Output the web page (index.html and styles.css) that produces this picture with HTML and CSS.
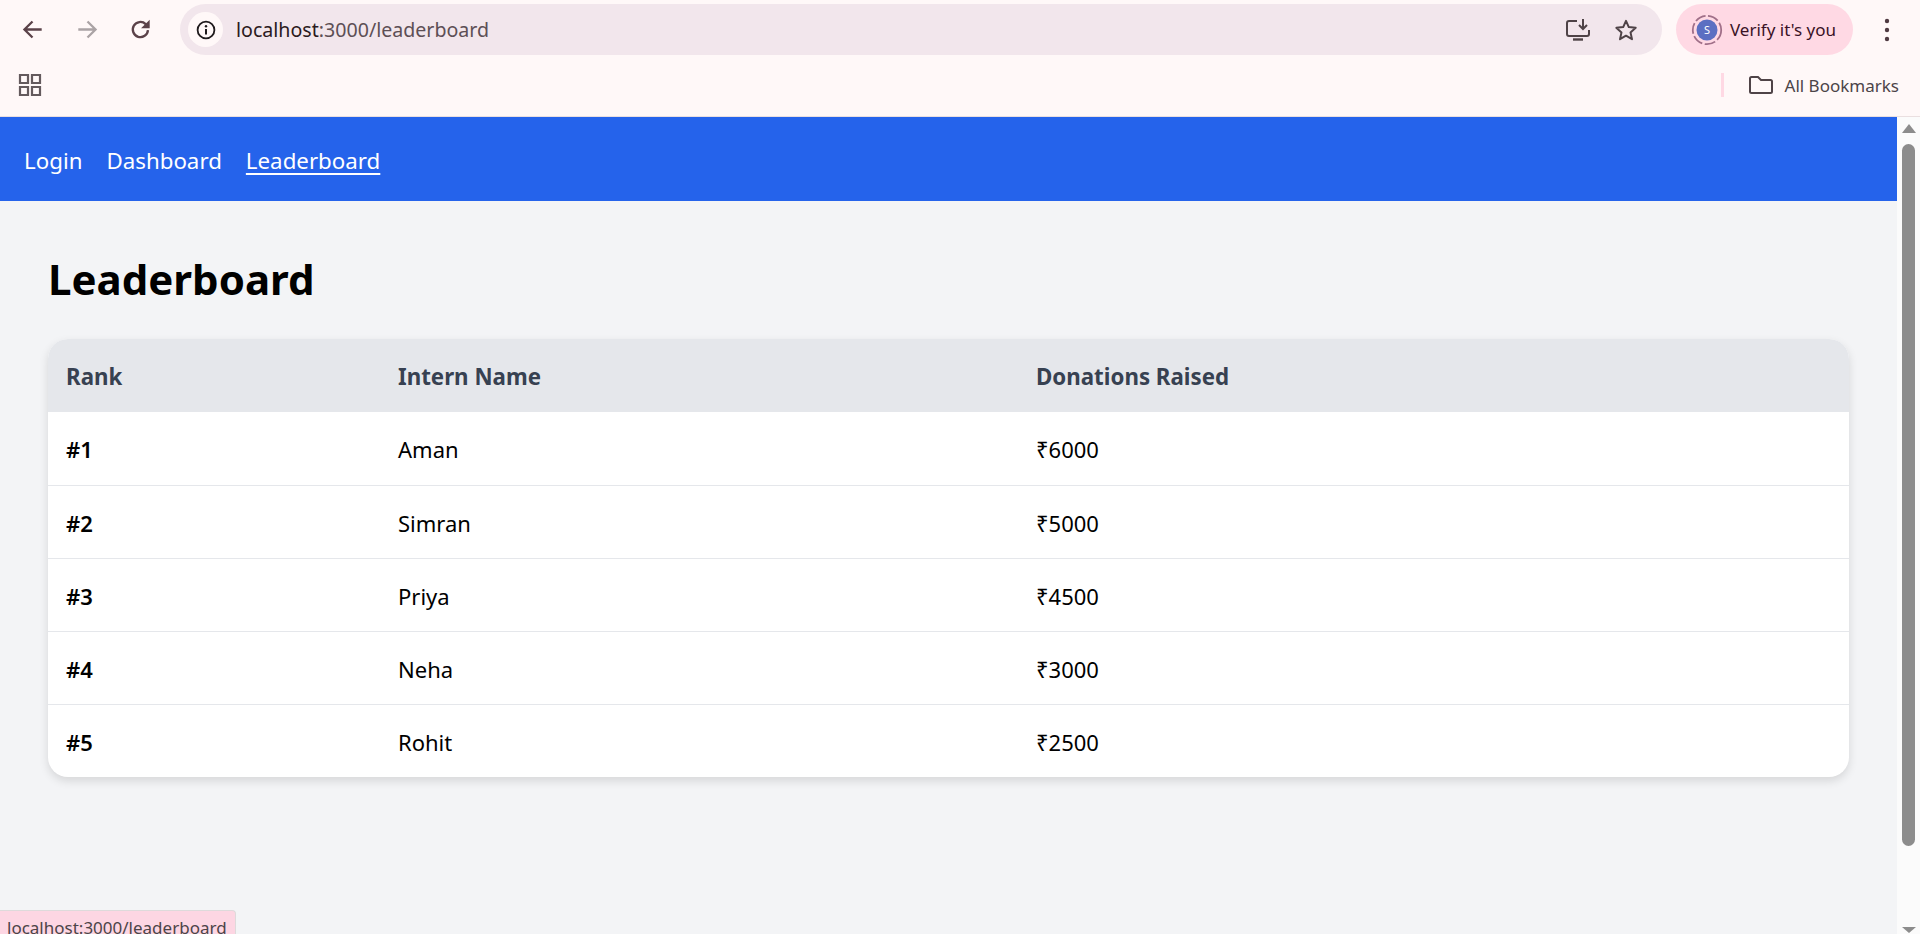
FILE: index.html
```html
<!DOCTYPE html>
<html lang="en">
  <head>
    <meta charset="UTF-8" />
    <meta name="viewport" content="width=device-width, initial-scale=1.0" />
    <title>Leaderboard</title>
    <link rel="stylesheet" href="styles.css">
  </head>
  <body>
    <div class="browser">
      <div class="toolbar">
        <svg class="tool-icon" viewBox="0 0 20 20"><path d="M18 10H3M10 3l-7 7 7 7" fill="none" stroke="#5b4249" stroke-width="2"/></svg>
        <svg class="tool-icon forward" viewBox="0 0 20 20"><path d="M2 10h15M10 3l7 7-7 7" fill="none" stroke="#aba3a5" stroke-width="2"/></svg>
        <svg class="tool-icon reload" viewBox="0 0 20 20"><path d="M16.500 10.500a6.600 6.600 0 1 1-2-5.200L17 7.500" fill="none" stroke="#5b4249" stroke-width="2"/><path d="M18 1.500V9h-7.500z" fill="#5b4249"/></svg>
        <div class="omnibox">
          <span class="site-info">
            <svg width="20" height="20" viewBox="0 0 20 20"><circle cx="10" cy="10" r="8.400" fill="none" stroke="#1f1a1c" stroke-width="1.800"/><path d="M10 9v5.500" stroke="#1f1a1c" stroke-width="2"/><circle cx="10" cy="6.200" r="1.200" fill="#1f1a1c"/></svg>
          </span>
          <span class="url"><span class="url-host">localhost</span>:3000/leaderboard</span>
          <svg class="omni-icon" width="26" height="24" viewBox="0 0 26 24"><path d="M12 3H4a2 2 0 0 0-2 2v11a2 2 0 0 0 2 2h18a2 2 0 0 0 2-2v-4" fill="none" stroke="#4f4347" stroke-width="2"/><path d="M8 21.500h10" stroke="#4f4347" stroke-width="2.400"/><path d="M18 1v9M14 7l4 4 4-4" fill="none" stroke="#4f4347" stroke-width="2"/></svg>
          <svg class="omni-icon star" width="24" height="24" viewBox="0 0 24 24"><path d="M12 2.800l2.800 6.300 6.900.7-5.200 4.600 1.500 6.800-6-3.500-6 3.500 1.500-6.800-5.200-4.600 6.900-.7z" fill="none" stroke="#4f4347" stroke-width="2" stroke-linejoin="round"/></svg>
        </div>
        <div class="profile">
          <svg width="32" height="32" viewBox="0 0 32 32"><circle cx="16" cy="16" r="14.200" fill="none" stroke="#a06f88" stroke-width="1.800" stroke-dasharray="11 2.500"/><circle cx="16" cy="16" r="10.500" fill="#5b6fc2"/><text x="16" y="20" class="avatar-letter">S</text></svg>
          <span>Verify it's you</span>
        </div>
        <svg class="menu-dots" width="6" height="24" viewBox="0 0 6 24"><circle cx="3" cy="3" r="2.200"/><circle cx="3" cy="12" r="2.200"/><circle cx="3" cy="21" r="2.200"/></svg>
      </div>
      <div class="bookmarks">
        <svg width="24" height="24" viewBox="0 0 24 24"><path d="M2 2h8v8H2zM14 2h8v8h-8zM2 14h8v8H2zM14 14h8v8h-8z" fill="none" stroke="#645a5d" stroke-width="2.200"/></svg>
        <span class="bookmarks-sep"></span>
        <svg class="folder" width="26" height="20" viewBox="0 0 26 20"><path d="M2 3.500A1.500 1.500 0 0 1 3.500 2h6.500l3 3h9.500A1.500 1.500 0 0 1 24 6.500v10a1.500 1.500 0 0 1-1.500 1.500h-19A1.500 1.500 0 0 1 2 16.500z" fill="none" stroke="#4f4347" stroke-width="2"/></svg>
        <span class="bookmarks-label">All Bookmarks</span>
      </div>
    </div>

    <div class="viewport">
      <div class="page">
        <nav class="nav">
          <a href="#">Login</a>
          <a href="#">Dashboard</a>
          <a href="#" class="active">Leaderboard</a>
        </nav>
        <main class="content">
          <h1>Leaderboard</h1>
          <div class="table-card">
            <table>
              <thead>
                <tr>
                  <th class="col-rank">Rank</th>
                  <th class="col-name">Intern Name</th>
                  <th>Donations Raised</th>
                </tr>
              </thead>
              <tbody>
                <tr><td class="rank">#1</td><td>Aman</td><td>₹6000</td></tr>
                <tr><td class="rank">#2</td><td>Simran</td><td>₹5000</td></tr>
                <tr><td class="rank">#3</td><td>Priya</td><td>₹4500</td></tr>
                <tr><td class="rank">#4</td><td>Neha</td><td>₹3000</td></tr>
                <tr><td class="rank">#5</td><td>Rohit</td><td>₹2500</td></tr>
              </tbody>
            </table>
          </div>
        </main>
      </div>
      <div class="scrollbar">
        <span class="arrow-up"></span>
        <span class="thumb"></span>
        <span class="arrow-down"></span>
      </div>
      <div class="status">localhost:3000/leaderboard</div>
    </div>
  </body>
</html>
```

FILE: styles.css
```css
* {
  box-sizing: border-box;
}

html,
body {
  height: 100%;
}

body {
  margin: 0;
  display: flex;
  flex-direction: column;
  overflow: hidden;
  font-family: "Noto Sans", "Open Sans", Arial, sans-serif;
  background-color: #f3f4f6;
}

.browser {
  height: 117px;
  flex-shrink: 0;
  background-color: #fff8f8;
  border-bottom: 1px solid #eadfe0;
}

.toolbar {
  height: 59px;
  padding: 4px 0 4px 21px;
  display: flex;
  align-items: center;
}

.tool-icon {
  width: 23px;
  height: 23px;
  flex-shrink: 0;
}

.forward {
  margin-left: 32px;
}

.reload {
  margin-left: 30px;
}

.omnibox {
  width: 1482px;
  height: 51px;
  margin-left: 28px;
  padding: 0 24px 0 8px;
  display: flex;
  align-items: center;
  background-color: #f2e6ec;
  border-radius: 26px;
}

.site-info {
  width: 35px;
  height: 35px;
  display: flex;
  align-items: center;
  justify-content: center;
  background-color: #fff8f8;
  border-radius: 50%;
}

.url {
  flex: 1;
  margin-left: 13px;
  font-size: 19.600px;
  color: #5d4f55;
}

.url-host {
  color: #2b1a20;
}

.omni-icon {
  flex-shrink: 0;
}

.star {
  margin-left: 23px;
}

.profile {
  width: 177px;
  height: 51px;
  margin-left: 14px;
  padding-left: 15px;
  display: flex;
  align-items: center;
  gap: 7px;
  flex-shrink: 0;
  background-color: #ffd9e4;
  border-radius: 26px;
  font-size: 17px;
  color: #3a1226;
}

.avatar-letter {
  font-size: 11px;
  fill: #fff;
  text-anchor: middle;
}

.menu-dots {
  margin-left: 31px;
  fill: #4f3a42;
  flex-shrink: 0;
}

.bookmarks {
  height: 52px;
  padding: 0 21px 0 18px;
  display: flex;
  align-items: center;
}

.bookmarks-sep {
  width: 3px;
  height: 24px;
  margin-left: auto;
  background-color: #ffd9e4;
}

.folder {
  margin-left: 24px;
}

.bookmarks-label {
  margin-left: 11px;
  font-size: 17px;
  color: #4c4448;
}

.viewport {
  flex: 1;
  min-height: 0;
  display: flex;
  position: relative;
}

.page {
  flex: 1;
  min-width: 0;
}

.nav {
  height: 84px;
  padding: 2px 24px 0;
  display: flex;
  align-items: center;
  gap: 24px;
  background-color: #2563eb;
}

.nav a {
  font-size: 22.300px;
  color: #fff;
  text-decoration: none;
}

.nav a.active {
  text-decoration: underline;
  text-underline-offset: 4px;
}

.content {
  padding: 48px;
}

h1 {
  margin: 0;
  height: 90px;
  line-height: 60px;
  font-size: 42px;
  font-weight: 700;
  color: #000;
}

.table-card {
  background-color: #fff;
  border-radius: 20px;
  overflow: hidden;
  box-shadow: 0 4px 10px rgba(0, 0, 0, 0.12);
}

table {
  width: 100%;
  border-collapse: collapse;
  table-layout: fixed;
  font-size: 22px;
}

th,
td {
  height: 73px;
  padding: 2px 18px 0;
  text-align: left;
}

th {
  background-color: #e5e7eb;
  color: #374151;
  font-size: 22.300px;
  font-weight: 700;
}

td {
  border-top: 1px solid #e5e7eb;
  color: #000;
}

tbody tr:first-child td {
  border-top: none;
}

.col-rank {
  width: 332px;
}

.col-name {
  width: 638px;
}

.rank {
  font-weight: 600;
}

.scrollbar {
  width: 23px;
  flex-shrink: 0;
  display: flex;
  flex-direction: column;
  align-items: center;
  background-color: #fbfbfb;
}

.arrow-up {
  margin-top: 7px;
  border-left: 7px solid transparent;
  border-right: 7px solid transparent;
  border-bottom: 9px solid #8c8c8c;
}

.thumb {
  width: 13px;
  height: 702px;
  margin-top: 11px;
  background-color: #8c8c8c;
  border-radius: 7px;
}

.arrow-down {
  margin-top: auto;
  margin-bottom: 1px;
  border-left: 7px solid transparent;
  border-right: 7px solid transparent;
  border-top: 6px solid #8c8c8c;
}

.status {
  position: absolute;
  left: 0;
  bottom: 0;
  width: 236px;
  height: 24px;
  padding-left: 7px;
  overflow: hidden;
  white-space: nowrap;
  background-color: #fdd6e3;
  border-top: 1px solid #dedadb;
  border-right: 1px solid #dedadb;
  border-top-right-radius: 4px;
  font-size: 17px;
  line-height: 34px;
  color: #4c4448;
}
```
